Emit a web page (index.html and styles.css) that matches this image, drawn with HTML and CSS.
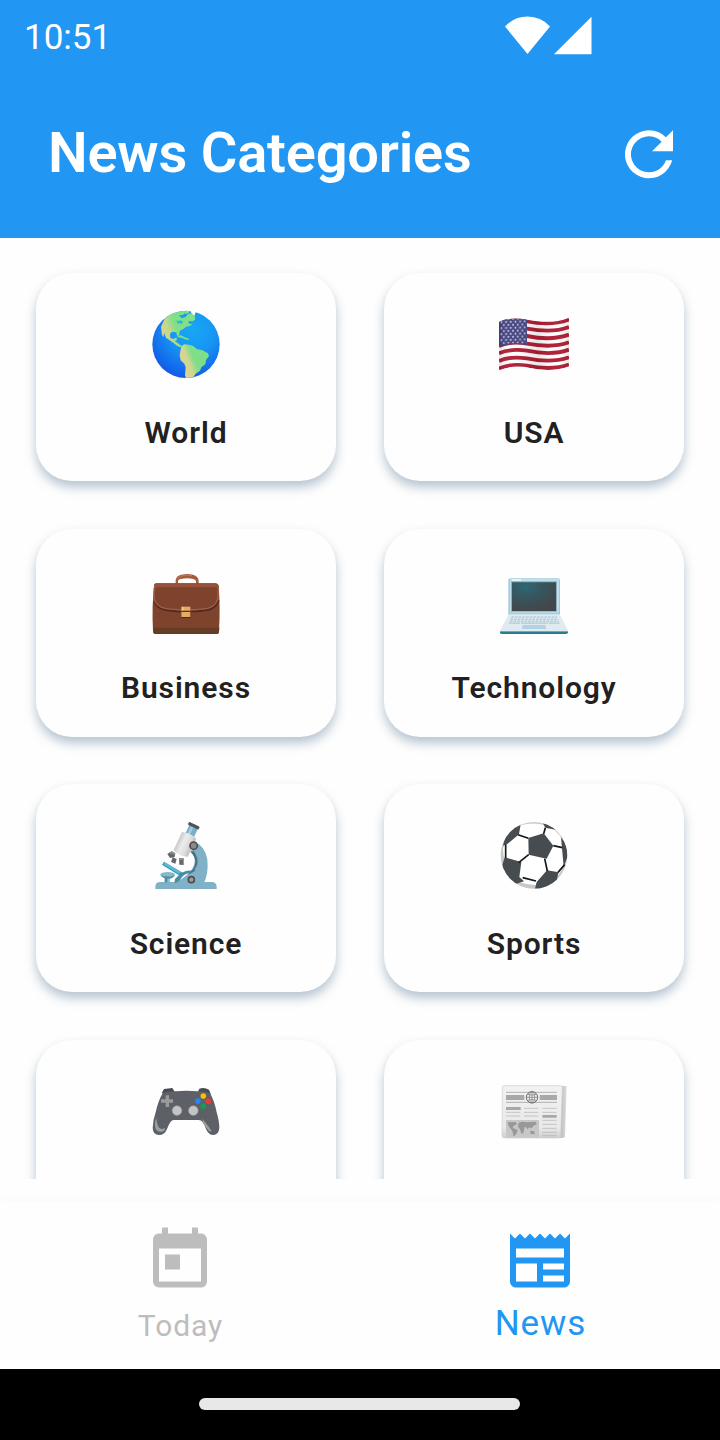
FILE: index.html
```
<!DOCTYPE html>
<html lang="en">
<head>
<meta charset="utf-8">
<title>News Categories</title>
<link rel="stylesheet" href="styles.css">
</head>
<body>
<div class="screen">
  <header class="header">
    <div class="status">
      <span class="clock">10:51</span>
      <svg class="signals" viewBox="0 0 88 40"><path fill="#fff" d="M0 11.5Q9 1.500 22.500 1.500T45 11.500L22.500 39zM49 39.300 86.500 1.700V39.300z"/></svg>
    </div>
    <div class="toolbar">
      <h1 class="title">News Categories</h1>
      <svg class="icon" viewBox="0 -.1 24 24"><path fill="#fff" d="M17.650 6.350A7.958 7.958 0 0 0 12 4a8 8 0 1 0 7.730 10h-2.080A5.990 5.990 0 0 1 12 18a6 6 0 1 1 4.220-10.220L13 11h7V4z"/></svg>
    </div>
  </header>

  <main class="grid">
    <article class="card">
      <svg class="emoji" viewBox="0 0 276 270">
        <defs>
          <radialGradient id="sea" cx=".6" cy=".28" r=".75"><stop offset="0" stop-color="#18a7f5"/><stop offset=".45" stop-color="#1796f3"/><stop offset="1" stop-color="#1258e8"/></radialGradient>
          <linearGradient id="land" gradientUnits="userSpaceOnUse" x1="62" y1="90" x2="105" y2="75"><stop offset="0" stop-color="#d8d58f"/><stop offset=".5" stop-color="#c5d68c"/><stop offset="1" stop-color="#81df89"/></linearGradient>
          <linearGradient id="south" gradientUnits="userSpaceOnUse" x1="135" y1="205" x2="168" y2="192"><stop offset="0" stop-color="#ddd394"/><stop offset=".5" stop-color="#cfd68f"/><stop offset="1" stop-color="#7fde88"/></linearGradient>
          <clipPath id="globe"><circle cx="138" cy="133" r="101"/></clipPath>
        </defs>
        <circle cx="138" cy="133" r="101" fill="url(#sea)"/>
        <g clip-path="url(#globe)">
          <path fill="url(#land)" d="M66 105 63 80 75 55 95 40 132 32 135 39 128 45 117 46 125 55 137 51 144 42 159 50 165 59 158 64 146 63 145 70 157 73 149 78 139 80 130 87 119 93 118 107 111 107 109 97 96 95 90 102 91 114 101 117 109 112 111 121 104 123 114 130 126 138 121 142 111 137 100 128 88 120 78 113 72 98 71 112z"/>
          <path fill="#28b8d2" d="m109 61 8 3 5-4 7 6-4 7-6-4-5 3z"/>
          <path fill="#81df89" d="m113 108 10-2 11 6 13 4-1 4-12-2-9-5-12-1zM132 33l18-1-5 8-9 2zM144 42l13-3 7 10 2 10-10-5z"/>
          <path fill="url(#south)" d="m124 139 9-6 13 1 14 4 10 9 17 4 17 9 3 8-9 12-2 13-12 9-4 10-13 9-7 10-7 9-13 0-5-14 2-24-4-11-11-10-3-15z"/>
        </g>
        <path fill="#fff" d="m155 31 12 5-4 12-7-8-4-3z"/>
      </svg>
      <h2 class="label">World</h2>
    </article>

    <article class="card">
      <svg class="emoji" viewBox="0 0 276 270">
        <defs>
          <clipPath id="flag"><path d="M33 66C61 53 88 54 117 59 160 67 202 70 243 53V199C204 214 164 211 126 204 94 196 61 199 33 211z"/></clipPath>
          <pattern id="stars" width="14" height="18" patternUnits="userSpaceOnUse" patternTransform="translate(36 61) skewY(-2)"><path fill="#d0d4ee" d="M2 3h4.500v5.500H2zM9 12h4.500v5.500H9z"/></pattern>
          <linearGradient id="fold"><stop offset="0" stop-color="#000" stop-opacity=".13"/><stop offset=".15" stop-color="#fff" stop-opacity=".04"/><stop offset=".55" stop-color="#000" stop-opacity=".1"/><stop offset=".8" stop-color="#fff" stop-opacity=".03"/><stop offset="1" stop-color="#000" stop-opacity=".12"/></linearGradient>
        </defs>
        <g clip-path="url(#flag)">
          <path fill="#fff" d="M30 45h220v175H30z"/>
          <g fill="none" stroke="#b01c34" stroke-width="11.500">
            <path d="M33 70C61 57 88 59 117 64 160 72 202 74 243 58"/>
            <path d="M33 93C61 80 88 81 117 86 160 94 202 97 243 81"/>
            <path d="M33 116C61 103 88 104 117 108 160 117 202 119 243 104"/>
            <path d="M33 138C61 125 88 126 117 131 160 139 202 142 243 127"/>
            <path d="M33 160C61 148 88 148 117 152 160 161 202 164 243 149"/>
            <path d="M33 183C61 170 88 171 117 175 160 184 202 186 243 172"/>
            <path d="M33 206C61 193 88 193 117 197 160 206 202 208 243 194"/>
          </g>
          <path fill="#43427f" d="M33 55h84v80q-43-9-84 6z"/><path fill="url(#stars)" d="M36 61q38-12 79-2v73q-42-8-79 4z"/>
          <path fill="url(#fold)" d="M30 45h220v175H30z"/>
        </g>
      </svg>
      <h2 class="label">USA</h2>
    </article>

    <article class="card">
      <svg class="emoji" viewBox="0 -15 276 270">
        <path fill="#a75b3c" d="M107 72V60q2-13 17-16 18-4 35 0 16 4 17 18v10h-8V64q0-5-8-7-18-4-38 0-8 1-8 6v9z"/>
        <path fill="none" stroke="#c47a56" stroke-width="3" d="M112 58q3-9 15-11 14-3 29 0"/>
        <path fill="#7e432c" d="M43 73q2-3 8-3h174q9 0 11 8 5 61 1 137 0 7-9 7H48q-8 0-9-8-4-78 4-141z"/>
        <path fill="#653c26" d="M39 203h199l-1 13q-1 6-9 6H48q-8 0-8-7z"/>
        <path fill="#98523a" d="M43 73q2-3 8-3h174q9 0 11 8l1 9q-4-5-12-5H53q-9 0-12 7z"/>
        <path fill="none" stroke="#4e2b29" stroke-width="6" d="M42 124q9 20 35 26 60 9 122 1 28-5 37-30"/>
        <path fill="none" stroke="#a65e3f" stroke-width="4" d="M43 84q-2 23 0 34 6 22 35 28 60 8 121 0 27-5 34-28 2-15 1-34"/>
        <path fill="#4e2b20" d="M124 154h28v20h-28z"/><path fill="#e6ac61" d="M124 140h27v31h-27z"/><path fill="#f9d387" d="M126 141h4v12h-4z"/><path fill="#5a322c" d="M124 152h27v4h-27z"/>
      </svg>
      <h2 class="label">Business</h2>
    </article>

    <article class="card">
      <svg class="emoji" viewBox="0 -15 276 270">
        <defs><radialGradient id="display" cx=".3" cy=".15" r=".85"><stop offset="0" stop-color="#2d6773"/><stop offset=".5" stop-color="#38545c"/><stop offset="1" stop-color="#42474b"/></radialGradient></defs>
        <rect x="61" y="55" width="155" height="112" rx="6" fill="#a5c9dc"/><path fill="#c0dfec" d="M66 57h147v101H66z"/><path fill="#e8f3f8" d="M72 57h27v6H72z"/>
        <path fill="#8caebe" d="M69 64h138v91H69z"/><path fill="url(#display)" d="M72 67h132v86H72z"/>
        <path fill="#e0eaf1" d="M62 163h153l24 47v5H37v-5z"/><path fill="#287b91" d="M36 214h204v4q-2 4-8 4H43q-7 0-7-4z"/><path fill="#6aacc0" d="M36 213h204v3H36z"/>
        <g fill="none" stroke="#b4cedb" stroke-width="5" stroke-dasharray="8 3"><path d="M70 171h137M67 178h144M65 185h148"/></g>
        <path fill="#bccfda" d="M62 188h34v4H62zM99 188h79v4H99zM182 188h33v4h-33z"/><path fill="#b5d2e3" d="M104 195h68l3 12h-73z"/>
      </svg>
      <h2 class="label">Technology</h2>
    </article>

    <article class="card">
      <svg class="emoji" viewBox="0 3 276 270">
        <defs><linearGradient id="tube"><stop offset="0" stop-color="#c8c8ca"/><stop offset=".35" stop-color="#ececed"/><stop offset=".7" stop-color="#dedee0"/><stop offset="1" stop-color="#bcbdc0"/></linearGradient></defs>
        <path fill="#80b1c7" d="M46 237v-8q1-13 15-13h45q26-10 43-29 17-20 15-39-2-15-13-24l25-23q29 24 27 67-1 30-10 48h22q14 0 15 14v7z"/>
        <path fill="#468da2" d="M74 195h15v22H74zM105 207q25-28 48-25l13-4q2 10-17 11-19 3-28 19-5 10-18 11z"/>
        <path fill="#86c3d4" d="M82 199h8v18h-8z"/>
        <ellipse cx="83" cy="193" rx="22" ry="7" fill="#86bac9"/><path fill="#528da1" d="M61 194q22 12 44 0-5 12-20 12-17 0-24-12z"/>
        <path fill="#3a8eaa" d="m72 155 57 34-7 10-56-35z"/><path fill="#55bddb" d="m73 157 49 29-4 7-48-30z"/>
        <path fill="#47727f" d="m151 125 11-1q16 24 8 44-12 23-27 26 22-17 23-37 0-18-15-32z"/>
        <g transform="translate(-5 4) rotate(25 140 95)"><path fill="#77b0c8" d="M129 38h28v35h-28z"/><path fill="#a3cddd" d="M135 41h8v30h-8z"/><rect x="124" y="32" width="36" height="10" rx="4" fill="#51555a"/><path fill="url(#tube)" d="M118 69q24-9 47 0v60q-23 9-47 0z"/></g>
        <path fill="#68686a" d="m82 132 13-8 11 6-2 11-14 3zM98 142l12 5-4 14-13-5zM117 144l14 1v20l-13-1z"/><path fill="#8e9092" d="m87 128 9-4 10 6-2 4zM118 144h13v6h-13z"/>
        <circle cx="161" cy="107" r="11" fill="#8a898b" stroke="#4d4d4f" stroke-width="5"/><circle cx="154" cy="209" r="9" fill="#9b9b9c" stroke="#4d4d4f" stroke-width="5"/>
      </svg>
      <h2 class="label">Science</h2>
    </article>

    <article class="card">
      <svg class="emoji" viewBox="0 3 276 270">
        <defs><clipPath id="ball"><circle cx="138" cy="136" r="100"/></clipPath></defs>
        <circle cx="138" cy="136" r="100" fill="#c8c8c8"/><path fill="#fff" d="M96 46q61-16 103 14 39 32 33 84-5 38-34 68-39 24-107 4Q48 179 45 119 50 73 96 46z"/>
        <g clip-path="url(#ball)">
          <g fill="#474c50"><path d="m121 84 46-14 29 37-20 39-54-12zM52 80Q66 50 98 43l-5 30-35 29-13 5zM163 36l34 10 7 13-32-6zM219 82q21 25 19 60l-11 28-5-55zM50 142l50 14-6 45 14 13-35 12Q43 203 43 165zM146 216l31-35 35 6-8 33-30 18-33-2z"/></g>
          <path fill="none" stroke="#151617" stroke-width="5" d="m90 74 31 11M167 71l5-18M196 107l27 6M53 103v41M122 134l-30 24M170 146l8 37M104 203l40 10M210 187l20-23"/>
        </g>
      </svg>
      <h2 class="label">Sports</h2>
    </article>

    <article class="card">
      <svg class="emoji" viewBox="0 -12 276 270">
        <path fill="#464c51" d="m65 70 7-13 25-3 7 11-5 10zM174 65l4-9q15-5 29 3l6 15z"/>
        <path fill="#5d6067" d="M69 68q19-6 38-4 32-4 65 0 20-2 38 6 13 22 20 57 8 28 8 47-2 21-18 21-14 0-22-18-8-27-22-27h-75q-10 0-20 27-7 18-24 18-18 0-19-21 1-24 9-47 8-37 22-59z"/>
        <path fill="#999b9d" d="M77 76h10v12h12v10H87v13H77V98H63V88h14z"/><circle cx="111" cy="122" r="14.500" fill="#c3c4c5" stroke="#929497" stroke-width="2"/><circle cx="160" cy="122" r="14.500" fill="#c3c4c5" stroke="#929497" stroke-width="2"/>
        <circle cx="190" cy="78" r="8.500" fill="#fbbc04"/><circle cx="174" cy="93" r="8.500" fill="#2684fc"/><circle cx="205" cy="94" r="8.500" fill="#ef3939"/><circle cx="190" cy="108" r="8.500" fill="#0da14d"/>
        <path fill="#9b9d9f" d="M49 143q-7 18-2 34 8 13 23 7 7-3 5-10-16 8-21-6-4-10-5-25zM187 146q1 15 13 29 9 13 15 9-7-12-15-22-7-8-13-16z"/>
      </svg>
    </article>

    <article class="card">
      <svg class="emoji" viewBox="0 -12 276 270">
        <defs><linearGradient id="paper" x2="0" y2="1"><stop offset="0" stop-color="#f2f2f2"/><stop offset=".8" stop-color="#e9e9e9"/><stop offset="1" stop-color="#cecece"/></linearGradient><linearGradient id="edge"><stop offset="0" stop-color="#9d9d9d"/><stop offset="1" stop-color="#dedede"/></linearGradient></defs>
        <path fill="url(#edge)" d="M210 48h26l-5 151q-1 5-8 5h-21z"/>
        <path fill="url(#paper)" stroke="#cfcfcf" stroke-width="2" d="M43 51q0-4 5-4h169q6 0 6 5l-5 146q0 6-7 6H49q-7 0-7-7z"/>
        <g stroke="#929292" stroke-width="2"><path d="M54 67h153M54 97h153"/></g><path fill="#a8a8a8" d="M54 75h55v15H54zM155 75h52v15h-52zM54 111h44v9H54zM163 135h43v8h-43z"/>
        <path stroke="#b0b0b0" stroke-width="2" d="M54 127h43M54 138h43M108 115h43M108 127h43M108 138h43M163 115h43M163 127h43M163 151h43M163 163h43M163 175h43M163 187h43M163 197h43"/>
        <circle cx="132" cy="82" r="17" fill="#eee" stroke="#666" stroke-width="3"/><g fill="none" stroke="#777" stroke-width="2"><ellipse cx="132" cy="82" rx="8" ry="17"/><path d="M132 65v34M115 82h34M119 73q13 5 26 0M119 91q13-5 26 0"/></g>
        <path fill="#c7c7c7" d="M54 150h99v52H54z"/><path fill="#989898" d="m58 157 25-1 4 7-10 4-3 7 15 6-3 10-9 10-4-18-9-11zM92 158l12-3 11 2 28-2 3 8-10 4-5 8-7-3-6 6-4-8-5 3-2 14-6 6-5-15-6-8zM127 182l12 2 1 9-13-2z"/>
      </svg>
    </article>
  </main>

  <nav class="nav">
    <a class="tab">
      <svg class="icon" viewBox="0 -.15 24 24"><path fill="currentColor" d="M19 3h-1V1h-2v2H8V1H6v2H5c-1.110 0-1.990.9-1.990 2L3 19a2 2 0 0 0 2 2h14c1.100 0 2-.9 2-2V5c0-1.100-.9-2-2-2zm0 16H5V8h14v11zM7 10h5v5H7z"/></svg>
      <span class="tab-label">Today</span>
    </a>
    <a class="tab active">
      <svg class="icon" viewBox="0 -.15 24 24"><path fill="currentColor" d="m22 3-1.670 1.670L18.670 3 17 4.670 15.330 3l-1.660 1.670L12 3l-1.670 1.670L8.670 3 7 4.670 5.330 3 3.670 4.670 2 3v16c0 1.100.9 2 2 2h16c1.100 0 2-.9 2-2V3zM11 19H4v-6h7v6zm9 0h-7v-2h7v2zm0-4h-7v-2h7v2zm0-4H4V8h16v3z"/></svg>
      <span class="tab-label">News</span>
    </a>
  </nav>
  <div class="system"><div class="pill"></div></div>
</div>
</body>
</html>
```
FILE: styles.css
```
* { box-sizing: border-box; }
body { margin: 0; font-family: Roboto, sans-serif; background: #fefefe; }
.screen { width: 720px; height: 1440px; display: flex; flex-direction: column; overflow: hidden; }
svg { display: block; flex: none; }
h1, h2 { margin: 0; }

.header { height: 238px; flex: none; background: #2196f3; color: #fff; }
.status { height: 72px; display: flex; justify-content: space-between; padding: 15px 127px 0 24px; }
.clock { font-size: 35px; line-height: 45px; }
.signals { width: 88px; height: 40px; }
.toolbar { display: flex; justify-content: space-between; align-items: center; height: 164px; padding: 0 35px 0 48px; }
.title { padding-bottom: 2px; font-size: 56px; font-weight: 600; line-height: 66px; letter-spacing: -.2px; }
.icon { width: 72px; height: 72px; }

.grid { height: 941px; flex: none; overflow: hidden; display: grid; grid-template-columns: 300px 300px; grid-auto-rows: 208px; gap: 47.55px 48px; padding: 35.3px 36px 0; }
.card { display: flex; flex-direction: column; align-items: center; padding-top: 26.3px; border-radius: 36px; background: #fefefe; box-shadow: 0 6px 11px rgba(62, 100, 135, .38); }
.emoji { width: 92px; height: 90px; }
.label { margin-top: 25px; font-size: 30px; line-height: 36px; font-weight: 600; letter-spacing: .9px; color: #212121; }

.nav { height: 167px; flex: none; margin-top: 23px; display: flex; background: #fefefe; box-shadow: 0 -2px 12px rgba(0, 0, 0, .025); }
.tab { flex: 1; display: flex; flex-direction: column; align-items: center; padding: 22px 0 0 1px; color: #bdbdbd; }
.tab .icon { margin-left: -1px; }
.tab-label { margin-top: 10px; font-size: 30px; line-height: 40px; letter-spacing: .9px; }
.active { color: #2196f3; }
.active .tab-label { margin-top: 8px; font-size: 35px; }

.system { height: 71px; flex: none; background: #000; padding-top: 29px; }
.pill { width: 321px; height: 12px; margin-left: 199px; border-radius: 6px; background: #e8e8e8; }
```
